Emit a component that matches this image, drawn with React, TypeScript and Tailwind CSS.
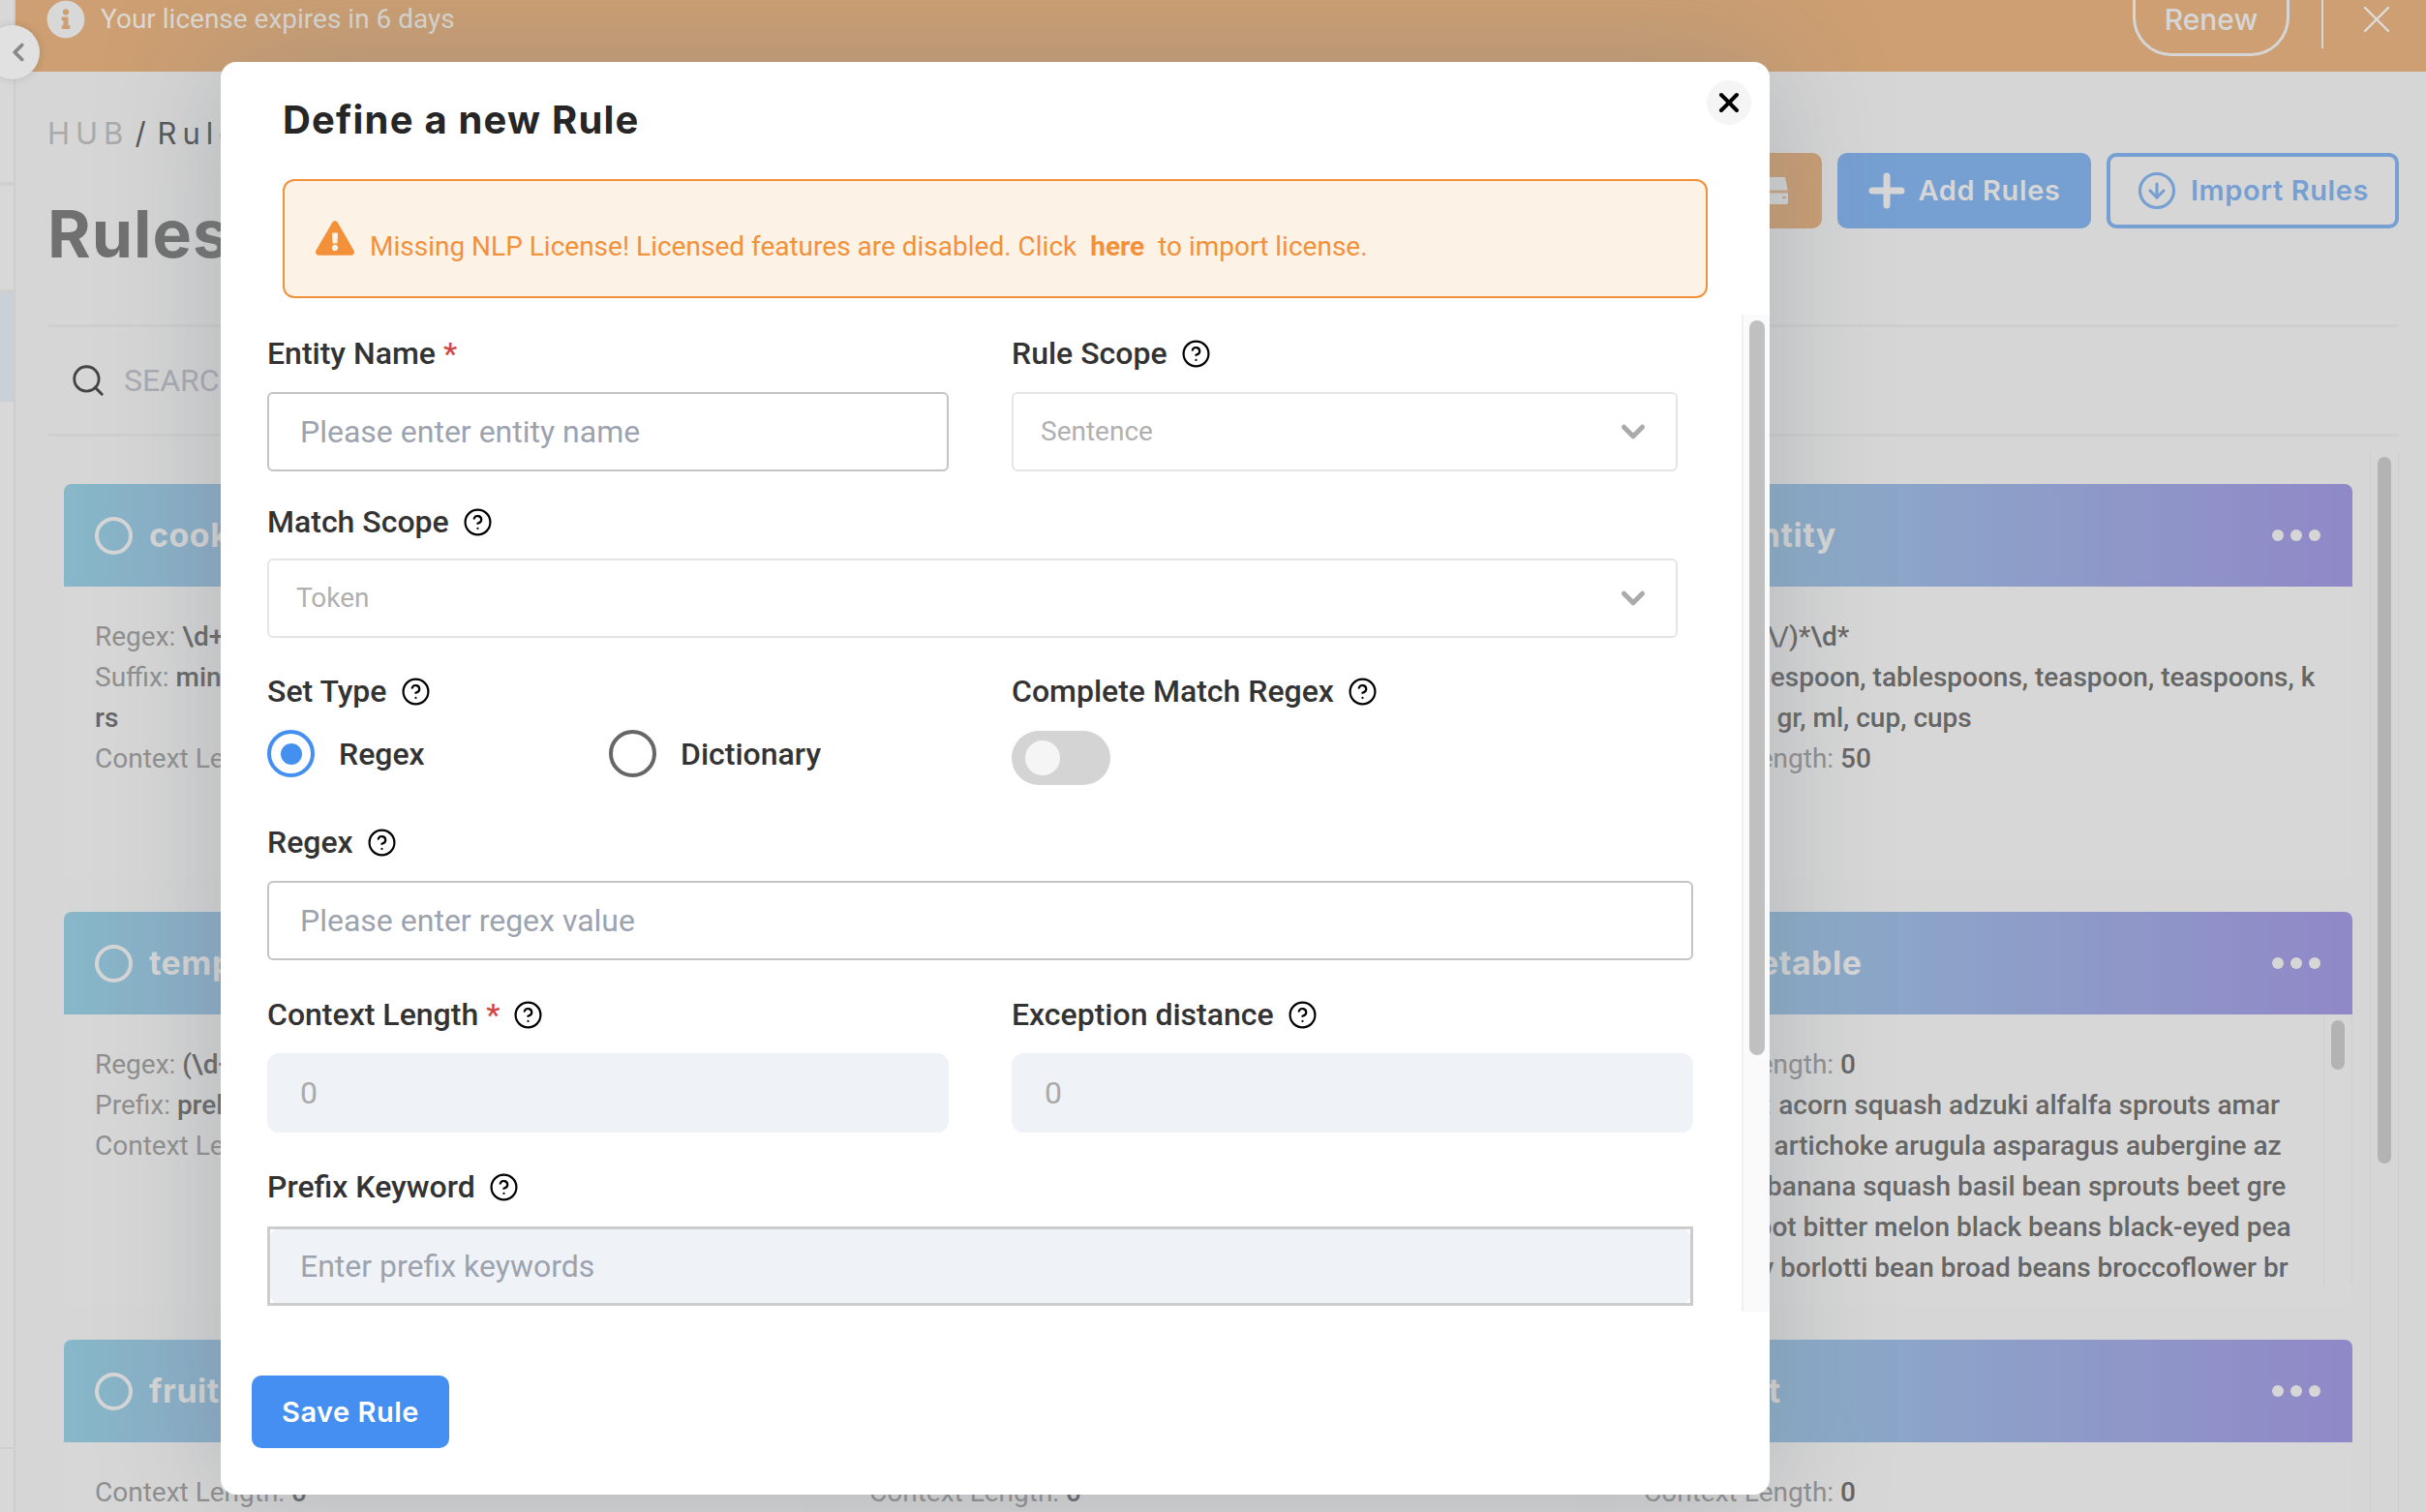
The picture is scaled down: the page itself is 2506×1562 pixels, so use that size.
// App.tsx
import { ChevronDown, ChevronLeft, CircleArrowDown, CircleHelp, Search, X } from "lucide-react";
import { FaExclamationTriangle, FaInfoCircle } from "react-icons/fa";

const heading = "[font-family:Inter,sans-serif]";

type Line = [string, string];

type RuleCard = {
  title: string;
  lines: Line[];
  scroll?: boolean;
};

const veg: Line[] = [
  ["Context Length: ", "0"],
  ["Dictionary: ", "acorn squash adzuki alfalfa sprouts amar"],
  ["", "anth ambr artichoke arugula asparagus aubergine az"],
  ["", "uki beans banana squash basil bean sprouts beet gre"],
  ["", "ens beetroot bitter melon black beans black-eyed pea"],
  ["", "s bok choy borlotti bean broad beans broccoflower br"],
];

const cards: RuleCard[] = [
  {
    title: "cooking_time",
    lines: [
      ["Regex: ", "\\d+(-\\d+)*"],
      ["Suffix: ", "min, mins, minute, minutes, hour, hou"],
      ["", "rs"],
      ["Context Length: ", "50"],
    ],
  },
  {
    title: "ingredient",
    lines: [
      ["Context Length: ", "0"],
      ["Dictionary: ", "butter flour sugar salt"],
    ],
  },
  {
    title: "quantity",
    lines: [
      ["Regex: ", "(\\d\\/)*\\d*"],
      ["Suffix: ", "tablespoon, tablespoons, teaspoon, teaspoons, k"],
      ["", "g, kgs, lbs, gr, ml, cup, cups"],
      ["Context Length: ", "50"],
    ],
  },
  {
    title: "temperature",
    lines: [
      ["Regex: ", "(\\d+)"],
      ["Prefix: ", "preliminary, heat"],
      ["Context Length: ", "50"],
    ],
  },
  {
    title: "tool",
    lines: [["Context Length: ", "0"]],
  },
  { title: "vegetable", lines: veg, scroll: true },
  { title: "fruit", lines: [["Context Length: ", "0"]] },
  { title: "grain", lines: [["Context Length: ", "0"]] },
  { title: "meat", lines: [["Context Length: ", "0"]] },
];

function Help() {
  return <CircleHelp size={31} strokeWidth={1.7} className="ml-[14px] shrink-0 text-black" />;
}

function Label({ text, required, help = true }: { text: string; required?: boolean; help?: boolean }) {
  return (
    <div className="flex h-[40px] items-center text-[32px] font-medium text-[#333]">
      <span>{text}</span>
      {required && <span className="ml-[8px] text-[#d64545]">*</span>}
      {help && <Help />}
    </div>
  );
}

function Select({ value, className }: { value: string; className: string }) {
  return (
    <div
      className={`flex h-[82px] items-center justify-between rounded-[6px] border-2 border-[#e5e5e5] pl-[28px] pr-[25px] text-[28px] text-[#b0b0b0] ${className}`}
    >
      <span>{value}</span>
      <ChevronDown size={38} strokeWidth={3.2} className="text-[#aaa]" />
    </div>
  );
}

function TextInput({ placeholder }: { placeholder: string }) {
  return (
    <input
      readOnly
      placeholder={placeholder}
      className="h-[82px] w-full rounded-[6px] border-2 border-[#c4c4c4] px-[32px] text-[32px] outline-none placeholder:text-[#9ca3af]"
    />
  );
}

function ZeroInput() {
  return (
    <input
      readOnly
      value="0"
      className="h-[82px] w-full rounded-[12px] bg-[#eff2f7] px-[34px] text-[32px] text-[#aaa] outline-none"
    />
  );
}

function Card({ card }: { card: RuleCard }) {
  return (
    <article className="h-[407px] overflow-hidden rounded-[8px] bg-[#d7d7d7]">
      <div className="flex h-[106px] items-center justify-between bg-gradient-to-r from-[#87b7c8] to-[#9088c8] pl-[32px] pr-[33px]">
        <div className="flex items-center gap-[17px]">
          <span className="h-[39px] w-[39px] rounded-full border-4 border-[#d6d6d6]" />
          <span className={`${heading} text-[34px] font-bold leading-[40px] tracking-[0.5px] text-[#d6d6d6]`}>{card.title}</span>
        </div>
        <div className="flex gap-[7px]">
          <span className="h-[12px] w-[12px] rounded-full bg-[#d6d6d6]" />
          <span className="h-[12px] w-[12px] rounded-full bg-[#d6d6d6]" />
          <span className="h-[12px] w-[12px] rounded-full bg-[#d6d6d6]" />
        </div>
      </div>
      <div className="flex h-[281px]">
        <div className="flex-1 overflow-hidden pl-[32px] pt-[31px] text-[28px] leading-[42px] text-[#8f8f8f]">
          {card.lines.map((line, i) => (
            <p key={i} className="whitespace-nowrap">
              {line[0]}
              <span className="font-medium text-[#666]">{line[1]}</span>
            </p>
          ))}
        </div>
        {card.scroll && (
          <div className="w-[30px] border-x border-[#cfcfcf] px-[7px] pt-[6px]">
            <div className="h-[51px] rounded-full bg-[#b3b3b3]" />
          </div>
        )}
      </div>
    </article>
  );
}

function Page() {
  return (
    <div className="flex h-[1562px]">
      <aside className="w-[16px] shrink-0 border-r-2 border-[#cdcdcd] bg-[#d8d8d8]">
        <div className="h-[192px] border-b-4 border-[#cfcfcf]" />
        <div className="h-[111px] border-b-4 border-[#cfcfcf]" />
        <div className="h-[112px] bg-[#c9d0d7]" />
        <div className="mt-[1080px] border-t-2 border-[#cfcfcf]" />
      </aside>

      <main className="min-w-0 flex-1">
        <div className="flex h-[74px] bg-[#cd9f72] pl-[32px] pr-[27px]">
          <div className="flex h-[40px] flex-1 items-center gap-[16px]">
            <FaInfoCircle size={40} className="text-[#d8d8d8]" />
            <span className="text-[28px] text-[#dcd9d3]">Your license expires in 6 days</span>
          </div>
          <div className="flex h-[58px] w-[162px] items-center justify-center overflow-hidden rounded-b-[40px] border-x-[3px] border-b-[3px] border-[#d6d6d6] pb-[14px] text-[30px] font-medium text-[#d6d6d6]">
            <span className={heading}>Renew</span>
          </div>
          <div className="ml-[33px] h-[50px] w-[2px] bg-[#d6d6d6]" />
          <X size={48} strokeWidth={1.2} className="ml-[31px] -mt-[4px] text-[#ddd]" />
        </div>

        <div className="pl-[33px] pr-[28px]">
          <div className="flex h-[264px] justify-between border-b-[3px] border-[#cfcfcf]">
            <div>
              <div className={`${heading} mt-[41px] flex items-center text-[31px] tracking-[6px] text-[#aaa]`}>
                <span>HUB</span>
                <span className="mx-[6px] text-[#555]">/</span>
                <span className="text-[#555]">Rules</span>
              </div>
              <h1 className={`${heading} mt-[39px] text-[68px] font-bold leading-[80px] tracking-[1px] text-[#707070]`}>Rules</h1>
            </div>
            <div className="mt-[84px] flex h-[78px] gap-[16px]">
              <div className="flex w-[120px] items-center justify-end rounded-[10px] bg-[#c99d72] pr-[32px]">
                <svg width="40" height="28" viewBox="0 0 40 28">
                  <path d="M8 0h26l3 15v11a2 2 0 0 1-2 2H5a2 2 0 0 1-2-2V15z" fill="#d6d6d6" />
                  <path d="M3 15h34" stroke="#c9a781" strokeWidth="3" />
                  <path d="M31 21h4" stroke="#c9a781" strokeWidth="2" />
                </svg>
              </div>
              <div className={`${heading} flex w-[262px] items-center justify-center gap-[14px] rounded-[10px] bg-[#769fd2] text-[29px] font-semibold tracking-[0.6px] text-[#d6d6d6]`}>
                <svg width="38" height="38" viewBox="0 0 38 38">
                  <path d="M19 4v30M4 19h30" stroke="#d6d6d6" strokeWidth="7" strokeLinecap="round" />
                </svg>
                Add Rules
              </div>
              <div className={`${heading} flex w-[302px] items-center justify-center gap-[14px] rounded-[10px] border-4 border-[#769fd2] text-[29px] font-semibold tracking-[0.6px] text-[#769fd2]`}>
                <CircleArrowDown size={42} strokeWidth={1.8} />
                Import Rules
              </div>
            </div>
          </div>

          <div className="flex h-[113px] items-center gap-[18px] border-b-[3px] border-[#cfcfcf] pl-[23px]">
            <Search size={38} strokeWidth={1.8} className="text-[#444]" />
            <span className="text-[32px] text-[#a8abb2]">SEARCH</span>
          </div>

          <div className="mt-[15px] flex">
            <div className="mt-[34px] grid flex-1 grid-cols-3 gap-x-[36px] gap-y-[35px] pl-[17px]">
              {cards.map((card) => (
                <Card key={card.title} card={card} />
              ))}
            </div>
            <div className="ml-[18px] h-[1200px] w-[30px] border-x border-[#cecece] px-[7px] pt-[6px]">
              <div className="h-[730px] rounded-full bg-[#b3b3b3]" />
            </div>
          </div>
        </div>
      </main>
    </div>
  );
}

function RuleModal() {
  return (
    <div className="absolute left-[228px] top-[64px] flex h-[1480px] w-[1600px] flex-col rounded-[16px] bg-white shadow-[0_0_120px_rgba(120,125,135,0.4)]">
      <button className="absolute right-[19px] top-[19px] flex h-[46px] w-[46px] items-center justify-center rounded-full bg-[#f5f5f5]">
        <X size={32} strokeWidth={3} className="text-black" />
      </button>

      <h2 className={`${heading} ml-[64px] mt-[36px] h-[48px] text-[40px] font-bold leading-[48px] tracking-[1.2px] text-[#262626]`}>
        Define a new Rule
      </h2>

      <div className="ml-[64px] mt-[37px] flex h-[123px] w-[1472px] items-center rounded-[12px] border-2 border-[#f2913a] bg-[#fdf2e6] pl-[32px] text-[28px] text-[#f2913a]">
        <FaExclamationTriangle size={40} className="mr-[16px] -mt-[2px]" />
        <div className="flex pt-[16px]">
          <span>Missing NLP License! Licensed features are disabled. Click</span>
          <span className="mx-[14px] font-bold">here</span>
          <span>to import license.</span>
        </div>
      </div>

      <div className="mt-[17px] flex h-[1030px]">
        <form className="flex-1 overflow-hidden pl-[48px] pr-[50px] pt-[20px]">
          <div className="grid grid-cols-2 gap-x-[65px]">
            <div>
              <Label text="Entity Name" required help={false} />
              <div className="mt-[20px]">
                <TextInput placeholder="Please enter entity name" />
              </div>
            </div>
            <div>
              <Label text="Rule Scope" />
              <Select value="Sentence" className="mt-[20px] w-[688px]" />
            </div>
          </div>

          <div className="mt-[32px]">
            <Label text="Match Scope" />
            <Select value="Token" className="mt-[18px] w-[1457px]" />
          </div>

          <div className="mt-[35px] grid grid-cols-2 gap-x-[65px]">
            <div>
              <Label text="Set Type" />
              <div className="mt-[20px] flex items-center text-[32px] font-medium text-[#333]">
                <span className="flex h-[49px] w-[49px] items-center justify-center rounded-full border-4 border-[#4490f0]">
                  <span className="h-[22px] w-[22px] rounded-full bg-[#4490f0]" />
                </span>
                <span className="ml-[25px] w-[279px]">Regex</span>
                <span className="h-[49px] w-[49px] rounded-full border-4 border-[#666]" />
                <span className="ml-[25px]">Dictionary</span>
              </div>
            </div>
            <div>
              <Label text="Complete Match Regex" />
              <div className="mt-[21px] flex h-[56px] w-[102px] items-center rounded-full bg-[#d4d4d4] pl-[14px]">
                <span className="h-[36px] w-[36px] rounded-full bg-[#f5f5f5]" />
              </div>
            </div>
          </div>

          <div className="mt-[39px]">
            <Label text="Regex" />
            <div className="mt-[20px]">
              <TextInput placeholder="Please enter regex value" />
            </div>
          </div>

          <div className="mt-[36px] grid grid-cols-2 gap-x-[65px]">
            <div>
              <Label text="Context Length" required />
              <div className="mt-[20px]">
                <ZeroInput />
              </div>
            </div>
            <div>
              <Label text="Exception distance" />
              <div className="mt-[20px]">
                <ZeroInput />
              </div>
            </div>
          </div>

          <div className="mt-[36px]">
            <Label text="Prefix Keyword" />
            <div className="mt-[21px] border-[3px] border-[#cccccc]">
              <input
                readOnly
                placeholder="Enter prefix keywords"
                className="h-[76px] w-full rounded-[8px] bg-[#eff2f7] px-[31px] text-[32px] outline-none placeholder:text-[#9ca3af]"
              />
            </div>
          </div>
        </form>

        <div className="w-[29px] border-l-2 border-[#efefef] bg-[#fafafa] pl-[6px] pr-[5px] pt-[6px]">
          <div className="h-[759px] rounded-full bg-[#c0c0c0]" />
        </div>
      </div>

      <button
        className={`${heading} ml-[32px] mt-[66px] h-[75px] w-[204px] rounded-[10px] bg-[#448ff1] text-[29px] font-semibold tracking-[0.5px] text-white`}
      >
        Save Rule
      </button>
    </div>
  );
}

export default function App() {
  return (
    <div className="relative h-[1562px] w-[2506px] overflow-hidden bg-[#d6d6d6] [font-family:Roboto,sans-serif]">
      <Page />
      <RuleModal />
      <div className="absolute left-[-15px] top-[26px] flex h-[56px] w-[56px] items-center justify-center rounded-full bg-[#e1e1e1] pl-[12px] shadow-[0_0_10px_rgba(0,0,0,0.12)]">
        <ChevronLeft size={30} strokeWidth={3} className="text-[#888]" />
      </div>
    </div>
  );
}
